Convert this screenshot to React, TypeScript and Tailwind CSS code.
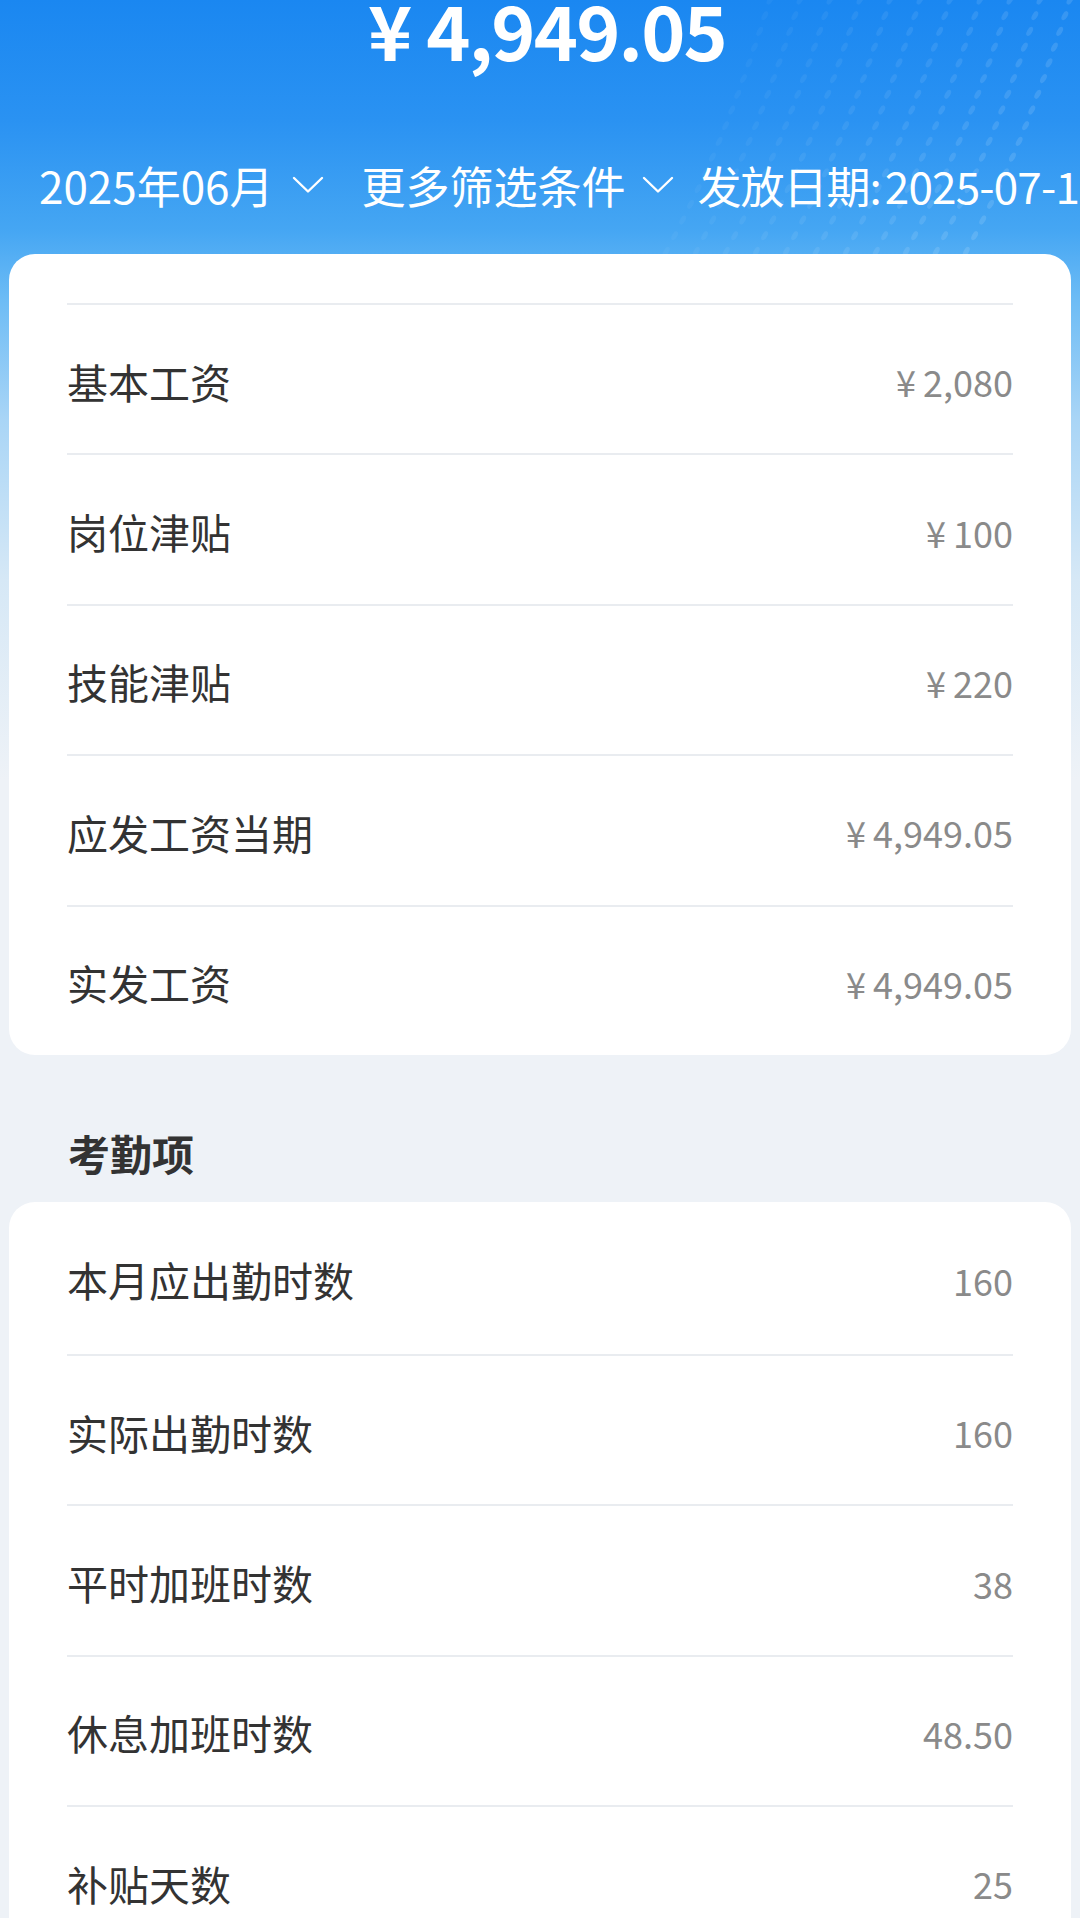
import React from 'react';

interface Item {
  label: string;
  value: string;
  yen?: boolean;
}

const salaryItems: Item[] = [
  { label: '基本工资', value: '2,080', yen: true },
  { label: '岗位津贴', value: '100', yen: true },
  { label: '技能津贴', value: '220', yen: true },
  { label: '应发工资当期', value: '4,949.05', yen: true },
  { label: '实发工资', value: '4,949.05', yen: true },
];

const attendanceItems: Item[] = [
  { label: '本月应出勤时数', value: '160' },
  { label: '实际出勤时数', value: '160' },
  { label: '平时加班时数', value: '38' },
  { label: '休息加班时数', value: '48.50' },
  { label: '补贴天数', value: '25' },
];

function Chevron() {
  return (
    <svg viewBox="0 0 32 18" className="h-[18px] w-[32px] shrink-0" fill="none">
      <polyline points="2,2 16,15.5 30,2" stroke="white" strokeWidth="2.4" strokeLinecap="round" strokeLinejoin="round" />
    </svg>
  );
}

// decorative dotted streaks in the top right of the header
function DotPattern() {
  const dots: React.ReactNode[] = [];
  for (let l = 0; l < 11; l++) {
    const x0 = 250 + l * 30;
    for (let j = 0; j < 22; j++) {
      const t = j / 21;
      const x = x0 - t * 150 + Math.sin(t * 3) * 14;
      const y = t * 330;
      dots.push(
        <ellipse
          key={`${l}-${j}`}
          cx={x}
          cy={y}
          rx={5}
          ry={2.6}
          transform={`rotate(-60 ${x} ${y})`}
          fill="white"
          opacity={0.04 + 0.08 * (l / 10)}
        />
      );
    }
  }
  return (
    <svg className="pointer-events-none absolute right-0 top-0 h-[330px] w-[560px]" viewBox="0 0 560 330">
      {dots}
    </svg>
  );
}

function Row({ item, divider, first }: { item: Item; divider: boolean; first?: boolean }) {
  return (
    <div
      className={
        divider
          ? 'flex h-[150.4px] items-center justify-between border-t-2 border-[#e9ecf0] pt-[4px]'
          : first
          ? 'flex h-[152px] items-center justify-between pt-[4px]'
          : 'flex h-[150.4px] items-center justify-between pt-[4px]'
      }
    >
      <span className="text-[41px] leading-none text-[#333333]">{item.label}</span>
      <span className="text-[36px] leading-none text-[#8a8a8a]">
        {item.yen && <span className="mr-[7px]">¥</span>}
        {item.value}
      </span>
    </div>
  );
}

export default function App() {
  return (
    <div className="relative min-h-screen w-full overflow-hidden bg-[#eef2f7] bg-[linear-gradient(180deg,#1a87f1_0px,#2a92f2_120px,#45a6f3_230px,#6dbcf5_300px,#a9d5f6_420px,#d6e8f6_580px,#eef2f7_780px)] pb-[40px] [font-family:'Noto_Sans_CJK_SC',sans-serif]">
      <DotPattern />

      <div className="relative">
        {/* total */}
        <div className="-mt-[9px] flex justify-center pl-[14px] text-[75px] font-bold leading-none text-white">
          <span>¥</span>
          <span className="ml-[14px] tracking-[-1.8px]">4,949.05</span>
        </div>

        {/* filters */}
        <div className="mt-[89px] flex h-[60px] items-center whitespace-nowrap pl-[39px] text-[44px] leading-none text-white">
          <span>2025年06月</span>
          <span className="ml-[18px]">
            <Chevron />
          </span>
          <span className="ml-[38px]">更多筛选条件</span>
          <span className="ml-[16px]">
            <Chevron />
          </span>
          <span className="ml-[24px] tracking-[-1px]">发放日期:</span>
          <span className="ml-[4px] tracking-[-0.8px]">2025-07-10</span>
        </div>

        {/* salary card */}
        <div className="mx-[9px] mt-[39px] rounded-[26px] bg-white px-[58px] pt-[49px]">
          {salaryItems.map((item) => (
            <Row key={item.label} item={item} divider />
          ))}
        </div>

        <div className="pb-[27px] pl-[68px] pt-[76px] text-[42px] font-bold leading-[44px] text-[#333333]">考勤项</div>

        {/* attendance card */}
        <div className="mx-[9px] rounded-[26px] bg-white px-[58px]">
          {attendanceItems.map((item, i) => (
            <Row key={item.label} item={item} divider={i > 0} first={i === 0} />
          ))}
        </div>
      </div>
    </div>
  );
}
